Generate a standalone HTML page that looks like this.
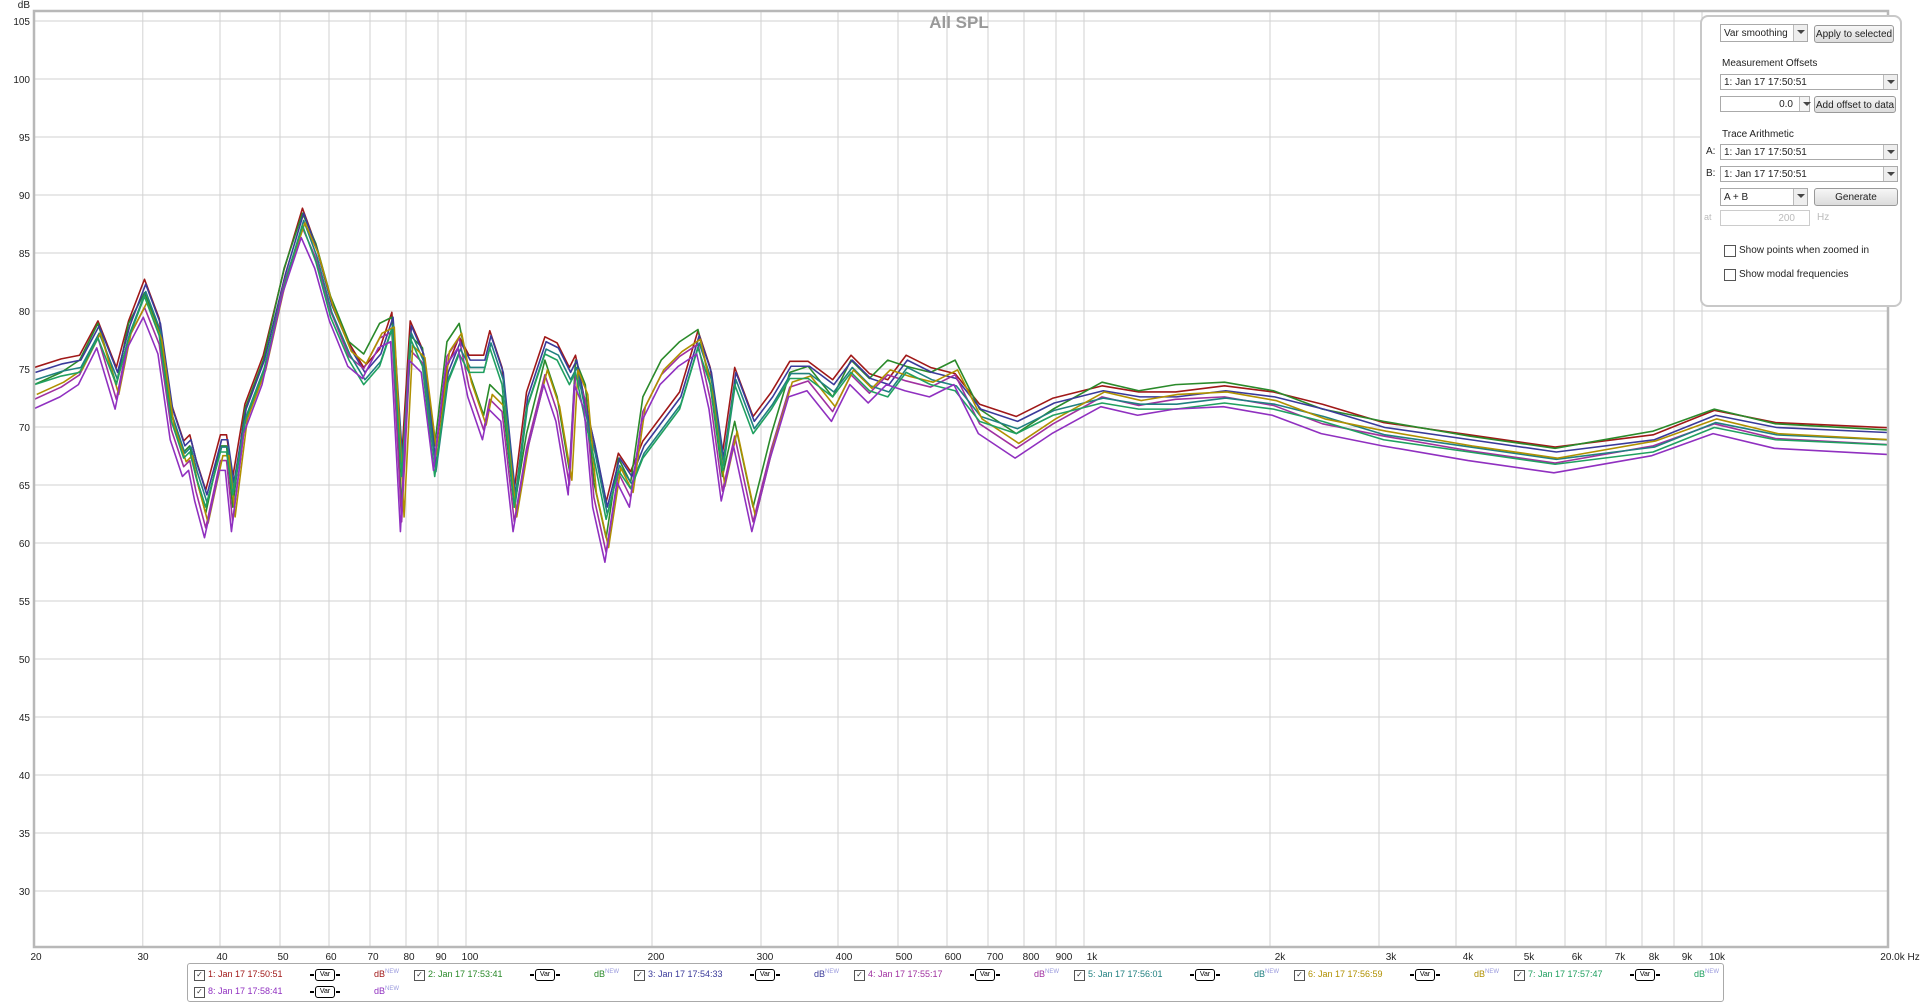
<!DOCTYPE html>
<html><head><meta charset="utf-8"><style>
body{margin:0;width:1920px;height:1002px;background:#fff;overflow:hidden;font-family:"Liberation Sans",sans-serif;position:relative}
svg{position:absolute;left:0;top:0}
.panel{position:absolute;left:1700px;top:15px;width:198px;height:288px;border:2px solid #c8c8c8;border-radius:8px;background:#fff;font-size:10px;color:#222}
.p{position:absolute}
.sel{position:absolute;height:16px;border:1px solid #aaa;background:#fff;font-size:10px;line-height:16px;padding-left:3px;box-sizing:border-box}
.sel .ar{position:absolute;right:0;top:0;width:13px;height:14px;border-left:1px solid #bbb;background:#eee}
.sel .ar:after{content:"";position:absolute;left:3px;top:5px;border:4px solid transparent;border-top:4px solid #444;border-bottom:0}
.btn{position:absolute;height:17px;border:1px solid #999;border-radius:3px;background:linear-gradient(#f6f6f6,#dcdcdc);font-size:10px;line-height:17px;text-align:center;box-sizing:border-box}
.cb{position:absolute;width:10px;height:10px;border:1px solid #555;background:#fff}
.legend{position:absolute;left:187px;top:963px;width:1535px;height:37px;border:1px solid #aaa;border-radius:3px;font-size:9px}
.le{position:absolute;height:14px}
.le .c{position:absolute;left:0;top:1px;width:9px;height:9px;border:1px solid #555;font-size:8px;line-height:8px;color:#333;text-align:center}
.le .t{position:absolute;left:14px;top:0;white-space:nowrap}
.le .v{position:absolute;left:121px;top:0;width:18px;height:10px;border:1.5px solid;border-radius:3px;font-size:7px;line-height:10px;text-align:center;color:#000}
.le .v:before,.le .v:after{content:"";position:absolute;top:4px;width:4px;height:1.5px;background:currentColor}
.le .v:before{left:-6px}.le .v:after{right:-6px}
.le .d{position:absolute;left:180px;top:0}
.le .d sup{font-size:6px;color:#99d}
</style></head><body>
<svg width="1920" height="1002" viewBox="0 0 1920 1002">
<defs><clipPath id="clp"><rect x="35" y="12" width="1852" height="934"/></clipPath></defs>
<g stroke="#d2d2d2" stroke-width="1">
<line x1="142.8" y1="11" x2="142.8" y2="947"/><line x1="220" y1="11" x2="220" y2="947"/><line x1="280" y1="11" x2="280" y2="947"/><line x1="329" y1="11" x2="329" y2="947"/><line x1="370" y1="11" x2="370" y2="947"/><line x1="406" y1="11" x2="406" y2="947"/><line x1="438" y1="11" x2="438" y2="947"/><line x1="466" y1="11" x2="466" y2="947"/><line x1="652" y1="11" x2="652" y2="947"/><line x1="761" y1="11" x2="761" y2="947"/><line x1="838" y1="11" x2="838" y2="947"/><line x1="898" y1="11" x2="898" y2="947"/><line x1="947" y1="11" x2="947" y2="947"/><line x1="988" y1="11" x2="988" y2="947"/><line x1="1024" y1="11" x2="1024" y2="947"/><line x1="1056" y1="11" x2="1056" y2="947"/><line x1="1084" y1="11" x2="1084" y2="947"/><line x1="1270" y1="11" x2="1270" y2="947"/><line x1="1379" y1="11" x2="1379" y2="947"/><line x1="1456" y1="11" x2="1456" y2="947"/><line x1="1516" y1="11" x2="1516" y2="947"/><line x1="1565" y1="11" x2="1565" y2="947"/><line x1="1606" y1="11" x2="1606" y2="947"/><line x1="1642" y1="11" x2="1642" y2="947"/><line x1="1674" y1="11" x2="1674" y2="947"/><line x1="1702" y1="11" x2="1702" y2="947"/>
<line x1="34" y1="21" x2="1888" y2="21"/><line x1="34" y1="79" x2="1888" y2="79"/><line x1="34" y1="137" x2="1888" y2="137"/><line x1="34" y1="195" x2="1888" y2="195"/><line x1="34" y1="253" x2="1888" y2="253"/><line x1="34" y1="311" x2="1888" y2="311"/><line x1="34" y1="369" x2="1888" y2="369"/><line x1="34" y1="427" x2="1888" y2="427"/><line x1="34" y1="485" x2="1888" y2="485"/><line x1="34" y1="543" x2="1888" y2="543"/><line x1="34" y1="601" x2="1888" y2="601"/><line x1="34" y1="659" x2="1888" y2="659"/><line x1="34" y1="717" x2="1888" y2="717"/><line x1="34" y1="775" x2="1888" y2="775"/><line x1="34" y1="833" x2="1888" y2="833"/><line x1="34" y1="891" x2="1888" y2="891"/>
</g>
<g font-size="10" fill="#222" text-anchor="end">
<text x="30" y="8">dB</text>
<text x="30" y="25">105</text><text x="30" y="83">100</text><text x="30" y="141">95</text><text x="30" y="199">90</text><text x="30" y="257">85</text><text x="30" y="315">80</text><text x="30" y="373">75</text><text x="30" y="431">70</text><text x="30" y="489">65</text><text x="30" y="547">60</text><text x="30" y="605">55</text><text x="30" y="663">50</text><text x="30" y="721">45</text><text x="30" y="779">40</text><text x="30" y="837">35</text><text x="30" y="895">30</text>
</g>
<g font-size="10" fill="#222" text-anchor="middle">
<text x="36" y="960">20</text><text x="143" y="960">30</text><text x="222" y="960">40</text><text x="283" y="960">50</text><text x="331" y="960">60</text><text x="373" y="960">70</text><text x="409" y="960">80</text><text x="441" y="960">90</text><text x="470" y="960">100</text><text x="656" y="960">200</text><text x="765" y="960">300</text><text x="844" y="960">400</text><text x="904" y="960">500</text><text x="953" y="960">600</text><text x="995" y="960">700</text><text x="1031" y="960">800</text><text x="1064" y="960">900</text><text x="1092" y="960">1k</text><text x="1280" y="960">2k</text><text x="1391" y="960">3k</text><text x="1468" y="960">4k</text><text x="1529" y="960">5k</text><text x="1577" y="960">6k</text><text x="1620" y="960">7k</text><text x="1654" y="960">8k</text><text x="1687" y="960">9k</text><text x="1717" y="960">10k</text><text x="1900" y="960">20.0k Hz</text>
</g>
<text x="959" y="28" font-size="17" font-weight="bold" fill="#999" text-anchor="middle">All SPL</text>
<defs>
<polyline id="a" fill="none" points="28,300 50,293 65,290 80,262 95,300 105,262 118,228 130,260 140,330 150,360 155,355 160,375 168,400 180,355 185,355 190,390 200,330 215,290 232,220 247,170 258,200 270,245 285,280 297,300 310,285 320,255 328,375 335,262 345,285 355,375 365,300 375,275 383,290 395,290 400,270 410,300 420,400 430,320 445,275 455,280 465,300 470,290 478,330 485,360 495,410 505,370 515,385 525,360 540,340 555,320 570,270 580,300 590,370 600,300 615,340 630,320 645,295 660,295 680,310 695,290 710,305 725,310 740,290 760,300 780,305 800,330 830,340 860,325 900,315 930,320 960,320 1000,315 1040,320 1080,330 1130,345 1200,355 1270,365 1350,355 1400,335 1450,345 1560,350"/>
<polyline id="b" fill="none" points="28,320 50,310 65,300 80,270 95,320 105,270 118,245 130,275 140,345 150,375 155,370 160,395 168,425 180,370 185,370 190,420 200,340 215,300 232,225 247,180 258,205 270,248 285,285 297,295 310,270 320,265 328,420 335,280 345,290 355,370 365,285 375,270 383,310 395,345 400,320 410,330 420,420 430,360 445,300 455,330 465,390 470,300 478,320 485,400 495,445 505,380 515,400 525,330 540,300 555,285 570,275 580,320 590,395 600,350 615,420 630,360 645,310 660,305 680,330 695,300 710,315 725,300 740,305 760,310 780,300 800,340 830,360 860,340 900,318 930,325 960,320 1000,318 1040,325 1080,340 1130,350 1200,362 1270,372 1350,358 1400,340 1450,352 1560,358"/>
</defs>
<g clip-path="url(#clp)">
<g transform="scale(1.2245,1.2249)" stroke-width="1.3" stroke-linejoin="round">
<use href="#a" stroke="#a01818"/>
<use href="#b" stroke="#2a8a2a" transform="translate(0,-6)"/>
<use href="#a" stroke="#3a3a9a" transform="translate(1,4)"/>
<use href="#b" stroke="#a030a0" transform="translate(0,6)"/>
<use href="#a" stroke="#208080" transform="translate(1,10)"/>
<use href="#b" stroke="#b09000" transform="translate(2,2)"/>
<use href="#a" stroke="#20a060" transform="translate(0,14)"/>
<use href="#b" stroke="#9030c0" transform="translate(-1,14)"/>
</g>
</g>
<rect x="34" y="11" width="1854" height="936" fill="none" stroke="#b8b8b8" stroke-width="2.5"/>
</svg>

<div class="panel">
<div class="sel" style="left:18px;top:7px;width:88px;height:18px;line-height:18px">Var smoothing<span class="ar" style="height:16px"></span></div>
<div class="btn" style="left:112px;top:8px;width:80px;height:18px;line-height:18px">Apply to selected</div>
<div class="p" style="left:20px;top:41px">Measurement Offsets</div>
<div class="sel" style="left:18px;top:57px;width:178px">1: Jan 17 17:50:51<span class="ar"></span></div>
<div class="sel" style="left:18px;top:79px;width:90px;text-align:right;padding-right:16px">0.0<span class="ar" style="background:#f3f3f3;width:9px"></span></div>
<div class="btn" style="left:112px;top:79px;width:82px">Add offset to data</div>
<div class="p" style="left:20px;top:112px">Trace Arithmetic</div>
<div class="p" style="left:4px;top:129px">A:</div>
<div class="sel" style="left:18px;top:127px;width:178px">1: Jan 17 17:50:51<span class="ar"></span></div>
<div class="p" style="left:4px;top:151px">B:</div>
<div class="sel" style="left:18px;top:149px;width:178px">1: Jan 17 17:50:51<span class="ar"></span></div>
<div class="sel" style="left:18px;top:171px;width:88px;height:18px;line-height:18px">A + B<span class="ar" style="height:16px"></span></div>
<div class="btn" style="left:112px;top:171px;width:84px;height:18px;line-height:18px">Generate</div>
<div class="p" style="left:2px;top:195px;color:#bbb;font-size:9px">at</div>
<div class="sel" style="left:18px;top:193px;width:90px;color:#bbb;text-align:right;padding-right:14px;border-color:#ccc">200</div>
<div class="p" style="left:115px;top:195px;color:#bbb">Hz</div>
<div class="cb" style="left:22px;top:228px"></div><div class="p" style="left:37px;top:228px">Show points when zoomed in</div>
<div class="cb" style="left:22px;top:252px"></div><div class="p" style="left:37px;top:252px">Show modal frequencies</div>
</div>

<div class="legend">
<div class="le" style="left:6px;top:5px;color:#a01818"><span class="c">✓</span><span class="t">1: Jan 17 17:50:51</span><span class="v">Var</span><span class="d">dB<sup>NEW</sup></span></div>
<div class="le" style="left:226px;top:5px;color:#2a8a2a"><span class="c">✓</span><span class="t">2: Jan 17 17:53:41</span><span class="v">Var</span><span class="d">dB<sup>NEW</sup></span></div>
<div class="le" style="left:446px;top:5px;color:#3a3a9a"><span class="c">✓</span><span class="t">3: Jan 17 17:54:33</span><span class="v">Var</span><span class="d">dB<sup>NEW</sup></span></div>
<div class="le" style="left:666px;top:5px;color:#a030a0"><span class="c">✓</span><span class="t">4: Jan 17 17:55:17</span><span class="v">Var</span><span class="d">dB<sup>NEW</sup></span></div>
<div class="le" style="left:886px;top:5px;color:#208080"><span class="c">✓</span><span class="t">5: Jan 17 17:56:01</span><span class="v">Var</span><span class="d">dB<sup>NEW</sup></span></div>
<div class="le" style="left:1106px;top:5px;color:#b09000"><span class="c">✓</span><span class="t">6: Jan 17 17:56:59</span><span class="v">Var</span><span class="d">dB<sup>NEW</sup></span></div>
<div class="le" style="left:1326px;top:5px;color:#20a060"><span class="c">✓</span><span class="t">7: Jan 17 17:57:47</span><span class="v">Var</span><span class="d">dB<sup>NEW</sup></span></div>
<div class="le" style="left:6px;top:22px;color:#9030c0"><span class="c">✓</span><span class="t">8: Jan 17 17:58:41</span><span class="v">Var</span><span class="d">dB<sup>NEW</sup></span></div>
</div>
</body></html>
